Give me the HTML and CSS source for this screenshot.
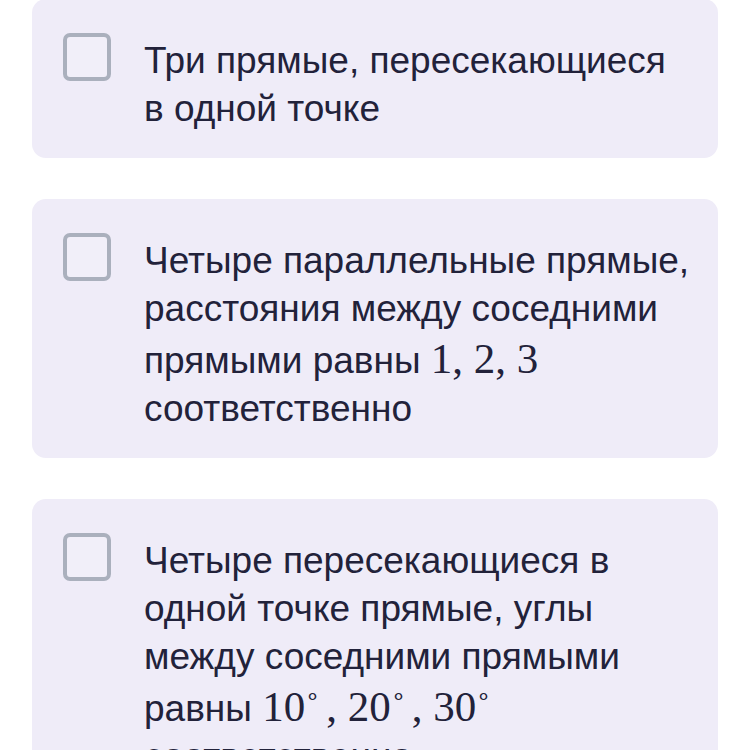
FILE: index.html
```html
<!DOCTYPE html>
<html lang="ru">
<head>
<meta charset="utf-8">
<link rel="stylesheet" href="styles.css">
</head>
<body>
<div class="list">
  <label class="option">
    <span class="box"></span>
    <span class="text">Три прямые, пересекающиеся в&nbsp;одной точке</span>
  </label>
  <label class="option">
    <span class="box"></span>
    <span class="text">Четыре параллельные прямые, расстояния между соседними прямыми равны <span class="math">1, 2, 3</span> соответственно</span>
  </label>
  <label class="option">
    <span class="box"></span>
    <span class="text">Четыре пересекающиеся в одной точке прямые, углы между соседними прямыми равны <span class="math">10<sup class="deg">∘</sup>,&nbsp;20<sup class="deg">∘</sup>,&nbsp;30<sup class="deg">∘</sup></span> соответственно</span>
  </label>
</div>
</body>
</html>
```
FILE: styles.css
```css
html, body {
  margin: 0;
  padding: 0;
  background: #ffffff;
}
body {
  font-family: "Liberation Sans", Arial, sans-serif;
  color: #22223a;
}
.list {
  display: flex;
  flex-direction: column;
  gap: 41px;
  margin: -1px 32px 0 32px;
}
.option {
  display: flex;
  align-items: flex-start;
  gap: 33px;
  background: #efecf8;
  border-radius: 14px;
  padding: 34px 12px 25px 31px;
}
.box {
  flex: 0 0 auto;
  width: 48px;
  height: 48px;
  box-sizing: border-box;
  border: 4.5px solid #aab0bd;
  border-radius: 7px;
  background: #f1eff9;
}
.text {
  font-size: 37px;
  line-height: 48px;
  margin-top: 4px;
}
.math {
  font-family: "Liberation Serif", "Times New Roman", serif;
  font-size: 43px;
  line-height: 51px;
  white-space: nowrap;
}
.deg {
  font-size: 24px;
  line-height: 0;
  vertical-align: 0;
  position: relative;
  top: -17px;
  margin-right: 6px;
}
```
